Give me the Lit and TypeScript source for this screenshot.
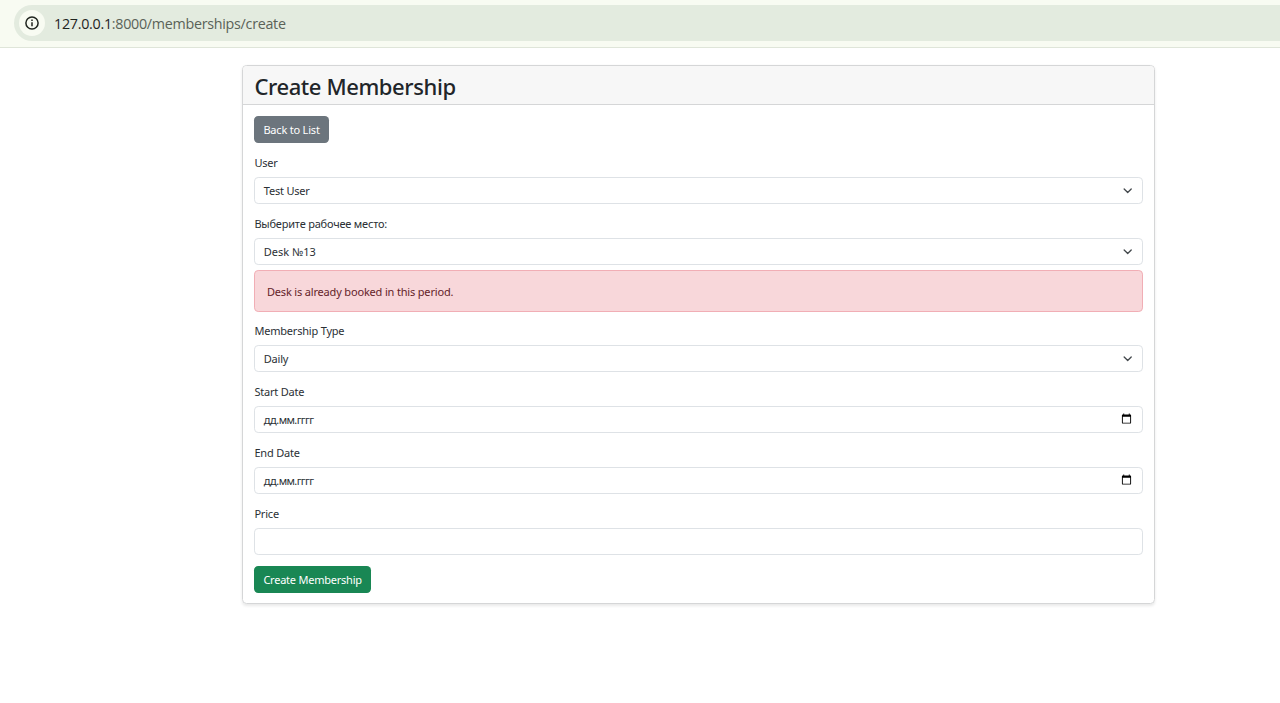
import { LitElement, html, css, svg } from "lit";
import { customElement } from "lit/decorators.js";

const chevron = html`<svg class="chevron" viewBox="0 0 16 16">${svg`<path d="m2 5 6 6 6-6" fill="none" stroke="#43484c" stroke-width="2.2" stroke-linecap="round" stroke-linejoin="round"/>`}</svg>`;
const calendar = html`<svg class="calendar" viewBox="0 0 24 24">${svg`<path d="M20 3h-1V1h-2v2H7V1H5v2H4c-1.1 0-2 .9-2 2v16c0 1.1.9 2 2 2h16c1.1 0 2-.9 2-2V5c0-1.1-.9-2-2-2zm0 18H4V8h16v13z" fill="#000"/>`}</svg>`;

@customElement("app-root")
export class AppRoot extends LitElement {
  static styles = css`
    :host { display: block; height: 703px; overflow: hidden; background: #fff; color: #2b3035;
      font: 11px/17px "Noto Sans", "Open Sans", sans-serif; letter-spacing: -0.2px; }
    * { box-sizing: border-box; }
    .bar { height: 48px; background: #f8fbf2; border-bottom: 1px solid #dfe5d9; padding: 5px 0 0 14px; }
    .address { height: 36px; background: #e3ebdf; border-radius: 18px 0 0 18px; display: flex; align-items: center; padding-left: 5px; }
    .info { width: 26px; height: 26px; border-radius: 50%; background: #f8fbf2; display: flex; align-items: center; justify-content: center; }
    .info svg { width: 14px; height: 14px; }
    .url { margin: 2px 0 0 9px; font: 14.3px/20px "Open Sans", sans-serif; letter-spacing: -0.28px; color: #5a6258; white-space: nowrap; }
    .host { color: #1f241e; }
    .card { margin: 17.4px 125px 0 242.4px; border: 1px solid #d5d6d7; border-radius: 4.5px; box-shadow: 0 1.5px 3px rgba(0,0,0,.09); }
    .header { height: 38.3px; background: #f7f7f7; border-bottom: 1px solid #d5d6d7; border-radius: 3.5px 3.5px 0 0; padding: 7px 11px 0; }
    h2 { margin: 0; font-size: 22px; line-height: 27px; font-weight: 500; letter-spacing: -0.4px; color: #212529; }
    .body { padding: 11.6px 11px 10.8px; }
    .btn { display: flex; width: fit-content; align-items: center; height: 27px; border: 0; border-radius: 4.2px; padding: 0 9px; font: inherit; letter-spacing: inherit; color: #fff; }
    .secondary { background: #6c757d; }
    .success { background: #198754; margin-top: 10.9px; letter-spacing: -0.23px; }
    .field { margin-top: 10.9px; }
    .label { display: block; height: 17px; margin-bottom: 5.9px; }
    .control { height: 27px; border: 1px solid #dee2e6; border-radius: 4.2px; display: flex; align-items: center; justify-content: space-between; padding: 0 9px 0 8.4px; }
    .desk { letter-spacing: 0; }
    .date { letter-spacing: -0.62px; }
    .chevron { width: 9.4px; height: 9.4px; margin: 0.6px 0.6px 0 0; }
    .calendar { width: 11px; height: 11px; margin: 0 1px 1.6px 0; }
    .alert { margin-top: 5.3px; height: 41.4px; border: 1px solid #f1aeb5; border-radius: 4.2px; background: #f8d7da; color: #642329; display: flex; align-items: center; padding: 1px 11.5px 0; letter-spacing: -0.17px; }
  `;

  private field(label: string, value: string, icon: unknown = "", kind = "", error = "") {
    return html`<div class="field"><label class="label"><span>${label}</span></label>
      <div class="control"><span class=${kind}>${value}</span>${icon}</div>
      ${error ? html`<div class="alert"><span>${error}</span></div>` : ""}</div>`;
  }

  render() {
    return html`
      <div class="bar"><div class="address">
        <div class="info"><svg viewBox="0 0 14 14"><circle cx="7" cy="7" r="6.1" fill="none" stroke="#20251f" stroke-width="1.5"/><path d="M7 6.2v4M7 3.6v1.5" stroke="#20251f" stroke-width="1.5"/></svg></div>
        <div class="url"><span class="host">127.0.0.1</span>:8000/memberships/create</div>
      </div></div>
      <div class="card">
        <div class="header"><h2><span>Create Membership</span></h2></div>
        <div class="body">
          <button class="btn secondary">Back to List</button>
          ${this.field("User", "Test User", chevron)}
          ${this.field("Выберите рабочее место:", "Desk №13", chevron, "desk", "Desk is already booked in this period.")}
          ${this.field("Membership Type", "Daily", chevron)}
          ${this.field("Start Date", "дд.мм.гггг", calendar, "date")}
          ${this.field("End Date", "дд.мм.гггг", calendar, "date")}
          ${this.field("Price", "")}
          <button class="btn success">Create Membership</button>
        </div>
      </div>`;
  }
}
